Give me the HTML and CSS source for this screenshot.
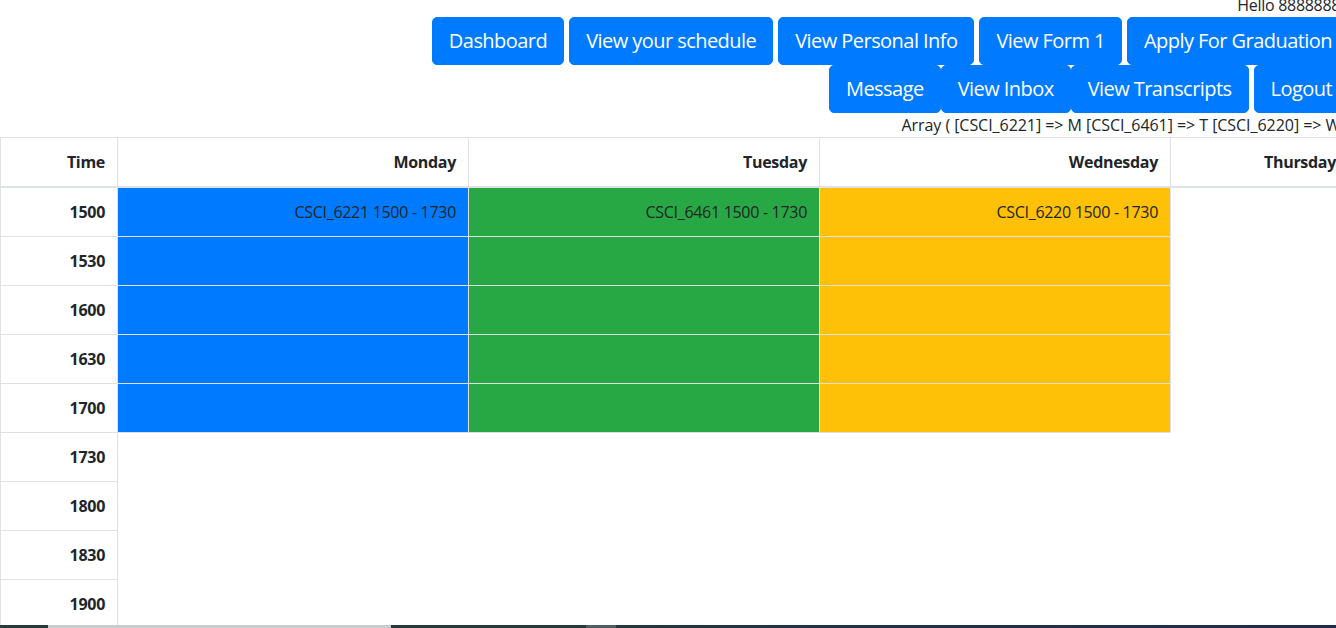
FILE: index.html
```html
<!DOCTYPE html>
<html lang="en">
<head>
<meta charset="utf-8">
<title>Schedule</title>
<link rel="stylesheet" href="styles.css">
</head>
<body>
<div class="page">
  <div class="hello">Hello 88888888</div>
  <div class="nav">
    <a class="btn">Dashboard</a>
    <a class="btn">View your schedule</a>
    <a class="btn">View Personal Info</a>
    <a class="btn">View Form 1</a>
    <a class="btn">Apply For Graduation</a>
  </div>
  <div class="nav nav-2">
    <div class="group">
      <a class="btn">Message</a><a class="btn">View Inbox</a><a class="btn">View Transcripts</a>
    </div>
    <a class="btn">Logout</a>
  </div>
  <div class="array">Array ( [CSCI_6221] =&gt; M [CSCI_6461] =&gt; T [CSCI_6220] =&gt; W )</div>
  <table class="schedule">
    <colgroup>
      <col class="c-time"><col class="c-day"><col class="c-day"><col class="c-day"><col class="c-thu">
    </colgroup>
    <thead>
      <tr><th>Time</th><th>Monday</th><th>Tuesday</th><th>Wednesday</th><th>Thursday</th></tr>
    </thead>
    <tbody>
      <tr><th>1500</th><td class="blue">CSCI_6221 1500 - 1730</td><td class="green">CSCI_6461 1500 - 1730</td><td class="yellow">CSCI_6220 1500 - 1730</td></tr>
      <tr><th>1530</th><td class="blue"></td><td class="green"></td><td class="yellow"></td></tr>
      <tr><th>1600</th><td class="blue"></td><td class="green"></td><td class="yellow"></td></tr>
      <tr><th>1630</th><td class="blue"></td><td class="green"></td><td class="yellow"></td></tr>
      <tr><th>1700</th><td class="blue"></td><td class="green"></td><td class="yellow"></td></tr>
      <tr><th>1730</th></tr>
      <tr><th>1800</th></tr>
      <tr><th>1830</th></tr>
      <tr><th>1900</th></tr>
    </tbody>
  </table>
</div>
<div class="taskbar"></div>
</body>
</html>
```

FILE: styles.css
```css
html, body {
  margin: 0;
  padding: 0;
  overflow: hidden;
  background: #fff;
}
body {
  font-family: "Open Sans", "Noto Sans", sans-serif;
  font-size: 16px;
  line-height: 1.5;
  color: #212529;
  letter-spacing: -0.3px;
}
.page {
  width: 1349px;
}
.hello {
  text-align: right;
  margin-top: -7px;
  height: 24px;
}
.nav {
  display: flex;
  justify-content: flex-end;
  gap: 5px;
}
.group {
  display: flex;
}
.btn {
  display: block;
  box-sizing: border-box;
  height: 48px;
  padding: 8px 16px;
  border: 1px solid #007bff;
  border-radius: 5px;
  background: #007bff;
  color: #fff;
  font-size: 20px;
  line-height: 30px;
  letter-spacing: -0.55px;
  white-space: nowrap;
}
.array {
  text-align: right;
  height: 24px;
  letter-spacing: -0.05px;
}
.schedule {
  width: 1348px;
  table-layout: fixed;
  border-collapse: collapse;
}
.c-time { width: 117px; }
.c-day { width: 351px; }
.c-thu { width: 178px; }
.schedule th,
.schedule td {
  padding: 12px;
  border: 1px solid #dee2e6;
  text-align: right;
  vertical-align: top;
  height: 24px;
}
.schedule th {
  font-weight: 700;
}
.schedule thead th {
  border-bottom: 2px solid #dee2e6;
}
.schedule .blue { background: #007bff; }
.schedule .green { background: #28a745; }
.schedule .yellow { background: #ffc107; }
.taskbar {
  position: fixed;
  left: 0;
  right: 0;
  bottom: 0;
  height: 3px;
  background: linear-gradient(to right, #263a3e 0, #263a3e 48px, #c9cccd 48px, #c9cccd 391px, #263a3e 391px, #263a3e 586px, #4f5d60 586px, #4f5d60 616px, #243640 616px, #1f2a4a 100%);
}
```
